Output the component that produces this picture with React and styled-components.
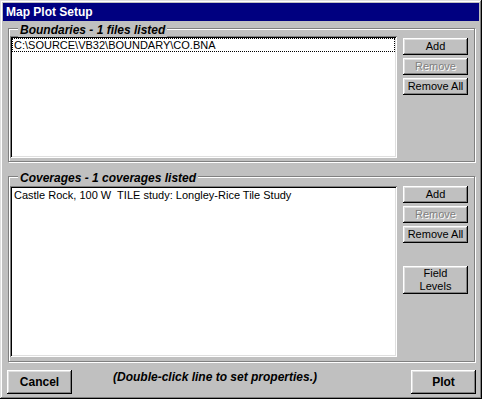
import React from "react";
import styled, { createGlobalStyle } from "styled-components";

const Global = createGlobalStyle`
  html, body { margin: 0; padding: 0; background: #c0c0c0; overflow: hidden; }
  * { box-sizing: border-box; }
`;

const Window = styled.div`
  width: 482px;
  height: 399px;
  background: #c0c0c0;
  padding: 3px;
  box-shadow: inset -1px -1px 0 #000, inset 1px 1px 0 #dfdfdf,
    inset -2px -2px 0 #808080, inset 2px 2px 0 #fff;
  display: flex;
  flex-direction: column;
  font-family: "Liberation Sans", Arial, sans-serif;
`;

const TitleBar = styled.div`
  height: 18px;
  background: #000080;
  color: #fff;
  font-weight: bold;
  font-size: 12px;
  line-height: 18px;
  padding-left: 3px;
  white-space: nowrap;
`;

const Group = styled.div`
  position: relative;
  width: 467px;
  height: ${(p) => p.$h}px;
  margin: ${(p) => p.$mt}px 0 0 5px;
  border: 1px solid #808080;
  box-shadow: inset 1px 1px 0 #fff, 1px 1px 0 #fff;
  padding: ${(p) => p.$pt}px 0 ${(p) => p.$pb}px 1px;
  display: flex;
  gap: 6px;
`;

const Legend = styled.div`
  position: absolute;
  left: 9px;
  top: -6px;
  padding: 0 2px;
  background: #c0c0c0;
  font-size: 12px;
  line-height: 14px;
  font-weight: bold;
  font-style: italic;
  color: #000;
  white-space: nowrap;
`;

const ListBox = styled.div`
  flex: 0 0 387px;
  background: #fff;
  padding: 2px;
  box-shadow: inset 1px 1px 0 #808080, inset -1px -1px 0 #fff,
    inset 2px 2px 0 #000, inset -2px -2px 0 #dfdfdf;
`;

const Item = styled.div`
  height: 14px;
  border: 1px dotted ${(p) => (p.$focus ? "#000" : "transparent")};
  padding: 0 1px;
  font-size: 11px;
  line-height: 12px;
  color: #000;
  white-space: pre;
`;

const ButtonCol = styled.div`
  display: flex;
  flex-direction: column;
  gap: 3px;
  margin-top: ${(p) => p.$mt || 0}px;
`;

const Btn = styled.button`
  width: 65px;
  height: ${(p) => p.$h || 17}px;
  margin-top: ${(p) => p.$mt || 0}px;
  background: #c0c0c0;
  border: none;
  padding: 0;
  box-shadow: inset -1px -1px 0 #000, inset 1px 1px 0 #fff,
    inset -2px -2px 0 #808080, inset 2px 2px 0 #dfdfdf;
  font-family: "Liberation Sans", Arial, sans-serif;
  font-size: ${(p) => (p.$bold ? 12 : 11)}px;
  font-weight: ${(p) => (p.$bold ? "bold" : "normal")};
  line-height: 13px;
  color: #000;
  &:disabled {
    color: #808080;
    text-shadow: 1px 1px 0 #fff;
  }
`;

const BottomRow = styled.div`
  display: flex;
  align-items: flex-start;
  margin-top: 8px;
  padding: 0 3px 0 4px;
`;

const Hint = styled.div`
  margin-left: 41px;
  font-size: 12px;
  line-height: 14px;
  font-weight: bold;
  font-style: italic;
  color: #000;
  white-space: nowrap;
`;

const Spacer = styled.div`
  flex: 1;
`;

export default function App() {
  return (
    <>
      <Global />
      <Window>
        <TitleBar>Map Plot Setup</TitleBar>
        <Group $h={134} $mt={7} $pt={7} $pb={3}>
          <Legend>Boundaries - 1 files listed</Legend>
          <ListBox>
            <Item $focus>C:\SOURCE\VB32\BOUNDARY\CO.BNA</Item>
          </ListBox>
          <ButtonCol $mt={2}>
            <Btn>Add</Btn>
            <Btn disabled>Remove</Btn>
            <Btn>Remove All</Btn>
          </ButtonCol>
        </Group>
        <Group $h={186} $mt={14} $pt={9} $pb={4}>
          <Legend>Coverages - 1 coverages listed</Legend>
          <ListBox>
            <Item>Castle Rock, 100 W  TILE study: Longley-Rice Tile Study</Item>
          </ListBox>
          <ButtonCol>
            <Btn>Add</Btn>
            <Btn disabled>Remove</Btn>
            <Btn>Remove All</Btn>
            <Btn $h={28} $mt={20}>
              Field
              <br />
              Levels
            </Btn>
          </ButtonCol>
        </Group>
        <BottomRow>
          <Btn $bold $h={24}>Cancel</Btn>
          <Hint>(Double-click line to set properties.)</Hint>
          <Spacer />
          <Btn $bold $h={24}>Plot</Btn>
        </BottomRow>
      </Window>
    </>
  );
}
